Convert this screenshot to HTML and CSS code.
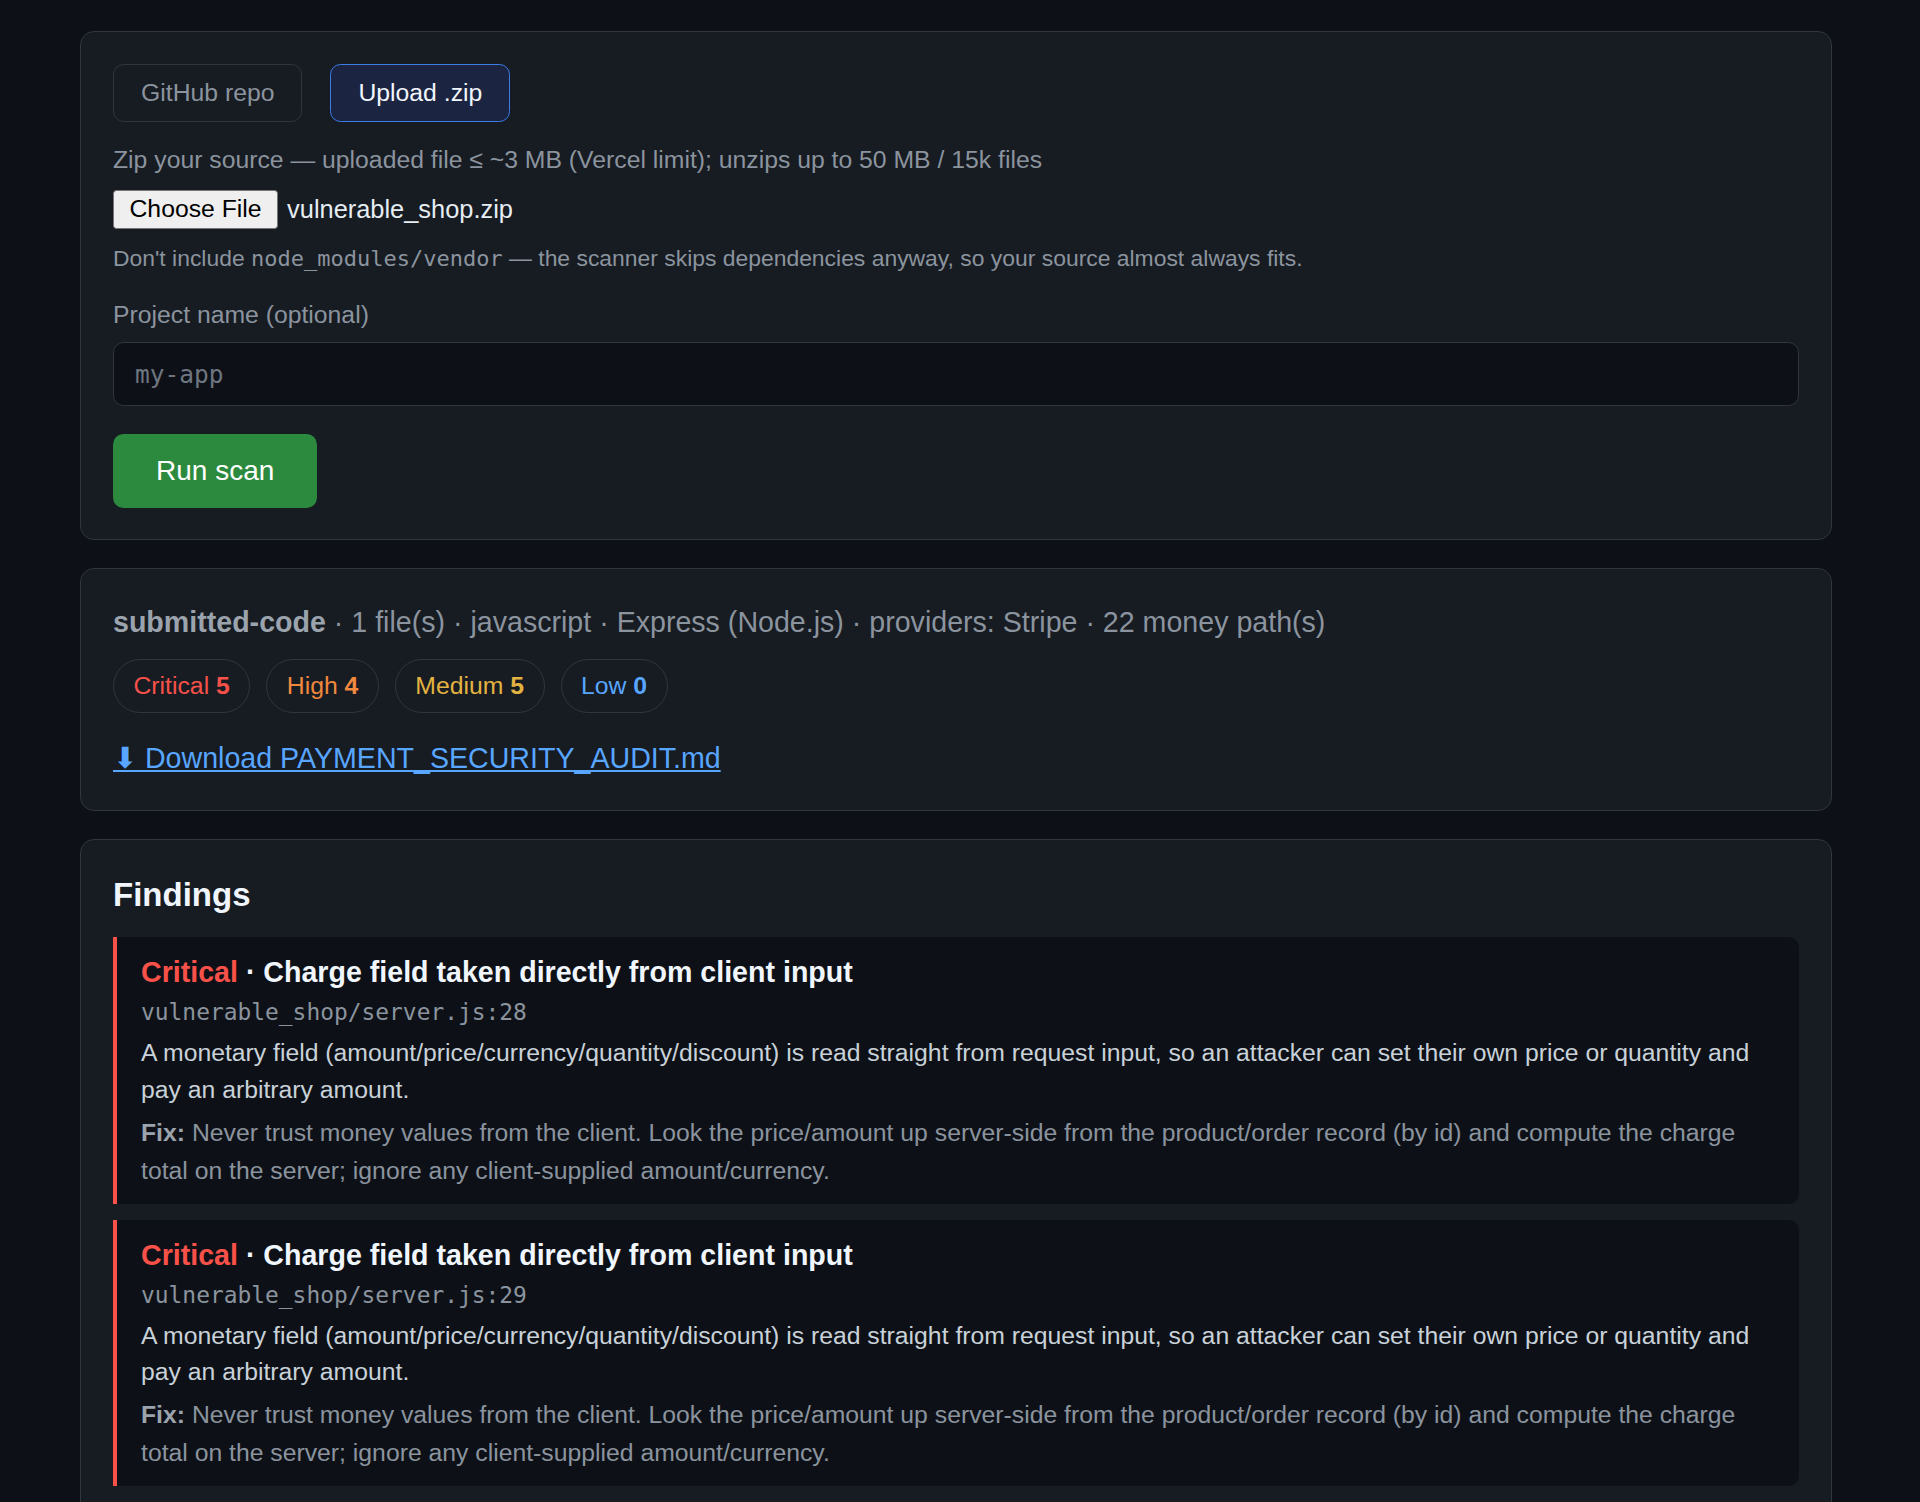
FILE: index.html
```html
<!DOCTYPE html>
<html lang="en">
<head>
<meta charset="utf-8">
<title>Payment security scan</title>
<link rel="stylesheet" href="styles.css">
</head>
<body>
<main class="page">
  <section class="card">
    <div class="tabs">
      <button class="tab">GitHub repo</button>
      <button class="tab active">Upload .zip</button>
    </div>
    <p class="note">Zip your source — uploaded file ≤ ~3 MB (Vercel limit); unzips up to 50 MB / 15k files</p>
    <div class="file-row">
      <button class="file-btn">Choose File</button>
      <span class="file-name">vulnerable_shop.zip</span>
    </div>
    <p class="hint">Don't include <code>node_modules/vendor</code> — the scanner skips dependencies anyway, so your source almost always fits.</p>
    <label class="label" for="proj">Project name (optional)</label>
    <input class="input" id="proj" type="text" placeholder="my-app">
    <button class="run">Run scan</button>
  </section>

  <section class="card">
    <p class="meta"><strong>submitted-code</strong> · 1 file(s) · javascript · Express (Node.js) · providers: Stripe · 22 money path(s)</p>
    <div class="pills">
      <span class="pill crit">Critical <b>5</b></span>
      <span class="pill high">High <b>4</b></span>
      <span class="pill med">Medium <b>5</b></span>
      <span class="pill low">Low <b>0</b></span>
    </div>
    <a class="download" href="#">⬇ Download PAYMENT_SECURITY_AUDIT.md</a>
  </section>

  <section class="card findings-card">
    <h2 class="findings-title">Findings</h2>
    <article class="finding">
      <p class="f-title"><span class="sev">Critical</span> · Charge field taken directly from client input</p>
      <p class="f-path">vulnerable_shop/server.js:28</p>
      <p class="f-desc">A monetary field (amount/price/currency/quantity/discount) is read straight from request input, so an attacker can set their own price or quantity and pay an arbitrary amount.</p>
      <p class="f-fix"><b>Fix:</b> Never trust money values from the client. Look the price/amount up server-side from the product/order record (by id) and compute the charge total on the server; ignore any client-supplied amount/currency.</p>
    </article>
    <article class="finding">
      <p class="f-title"><span class="sev">Critical</span> · Charge field taken directly from client input</p>
      <p class="f-path">vulnerable_shop/server.js:29</p>
      <p class="f-desc">A monetary field (amount/price/currency/quantity/discount) is read straight from request input, so an attacker can set their own price or quantity and pay an arbitrary amount.</p>
      <p class="f-fix"><b>Fix:</b> Never trust money values from the client. Look the price/amount up server-side from the product/order record (by id) and compute the charge total on the server; ignore any client-supplied amount/currency.</p>
    </article>
  </section>
</main>
</body>
</html>
```

FILE: styles.css
```css
* { box-sizing: border-box; }

html, body {
  margin: 0;
  background: #0d1117;
}

body {
  font-family: "Liberation Sans", Arial, sans-serif;
  color: #e6edf3;
}

.page {
  padding: 31px 0 40px 80px;
}

.card {
  width: 1752px;
  background: #171b22;
  border: 1px solid #30363d;
  border-radius: 14px;
  padding: 32px 32px 31px;
}

.card + .card {
  margin-top: 28px;
}

.findings-card {
  padding-bottom: 40px;
}

/* tabs */
.tabs {
  display: flex;
  gap: 28px;
  margin-bottom: 24px;
}

.tab {
  font-family: inherit;
  font-size: 24.75px;
  line-height: 28px;
  padding: 14px 27px;
  border: 1px solid #30363d;
  border-radius: 10.5px;
  background: transparent;
  color: #8b949e;
}

.tab.active {
  background: #1b2440;
  border-color: #3b7ce6;
  color: #f0f6fc;
}

.note {
  margin: 0 0 16px;
  font-size: 24.75px;
  line-height: 28px;
  color: #8b949e;
}

.file-row {
  display: flex;
  align-items: center;
  height: 39px;
  margin-bottom: 16px;
}

.file-btn {
  font-family: inherit;
  font-size: 24.75px;
  line-height: 1;
  height: 39px;
  padding: 0 15.5px;
  background: #efefef;
  color: #000;
  border: 1px solid #767676;
  border-radius: 3.5px;
  margin-right: 9px;
}

.file-name {
  font-size: 25.4px;
  color: #e6edf3;
}

.hint {
  margin: 0 0 29px;
  font-size: 22.9px;
  line-height: 26px;
  color: #8b949e;
}

.hint code {
  font-family: "DejaVu Sans Mono", monospace;
  font-size: 22px;
}

.label {
  display: block;
  font-size: 24.75px;
  line-height: 28px;
  color: #8b949e;
  margin-bottom: 13px;
}

.input {
  display: block;
  width: 100%;
  height: 64px;
  background: #0d1117;
  border: 1px solid #30363d;
  border-radius: 10.5px;
  padding: 0 21px;
  font-family: "DejaVu Sans Mono", monospace;
  font-size: 24.5px;
  color: #e6edf3;
  margin-bottom: 28px;
  outline: none;
}

.input::placeholder {
  color: #6e7681;
}

.run {
  font-family: inherit;
  font-size: 28px;
  line-height: 32px;
  color: #fff;
  background: #2b8a3e;
  border: none;
  border-radius: 10.5px;
  padding: 21px 43px;
}

/* summary */
.meta {
  margin: 0 0 16px;
  font-size: 28.6px;
  line-height: 42px;
  color: #8b949e;
}

.meta strong {
  color: #9ba3ad;
}

.pills {
  display: flex;
  gap: 16px;
  margin-bottom: 24px;
}

.pill {
  font-size: 24.75px;
  line-height: 28px;
  padding: 12px 19.5px;
  border: 1px solid #30363d;
  border-radius: 999px;
}

.pill.crit { color: #f85149; }
.pill.high { color: #f0883e; }
.pill.med { color: #e3b341; }
.pill.low { color: #58a6ff; }

.download {
  display: inline-block;
  font-size: 28.6px;
  line-height: 42px;
  color: #58a6ff;
  text-decoration: underline;
}

/* findings */
.findings-title {
  margin: 0 0 19px;
  font-size: 33px;
  line-height: 46px;
  font-weight: bold;
  color: #f0f6fc;
}

.finding {
  background: #0d1117;
  border-left: 4px solid #f85149;
  border-radius: 0 10.5px 10.5px 0;
  padding: 14px 24px 14px;
}

.finding + .finding {
  margin-top: 16px;
}

.finding p {
  margin: 0;
}

.f-title {
  font-size: 28.6px;
  line-height: 42px;
  font-weight: bold;
  color: #f0f6fc;
  margin-bottom: 2px !important;
}

.f-title .sev {
  color: #f85149;
}

.f-path {
  font-family: "DejaVu Sans Mono", monospace;
  font-size: 22.9px;
  line-height: 34px;
  color: #8b949e;
  margin-bottom: 6px !important;
}

.f-desc {
  font-size: 24.75px;
  line-height: 36.75px;
  color: #c9d1d9;
  margin-bottom: 5px !important;
}

.f-fix {
  font-size: 24.75px;
  line-height: 38px;
  color: #8b949e;
}

.f-fix b {
  color: #9ba3ad;
}
```
